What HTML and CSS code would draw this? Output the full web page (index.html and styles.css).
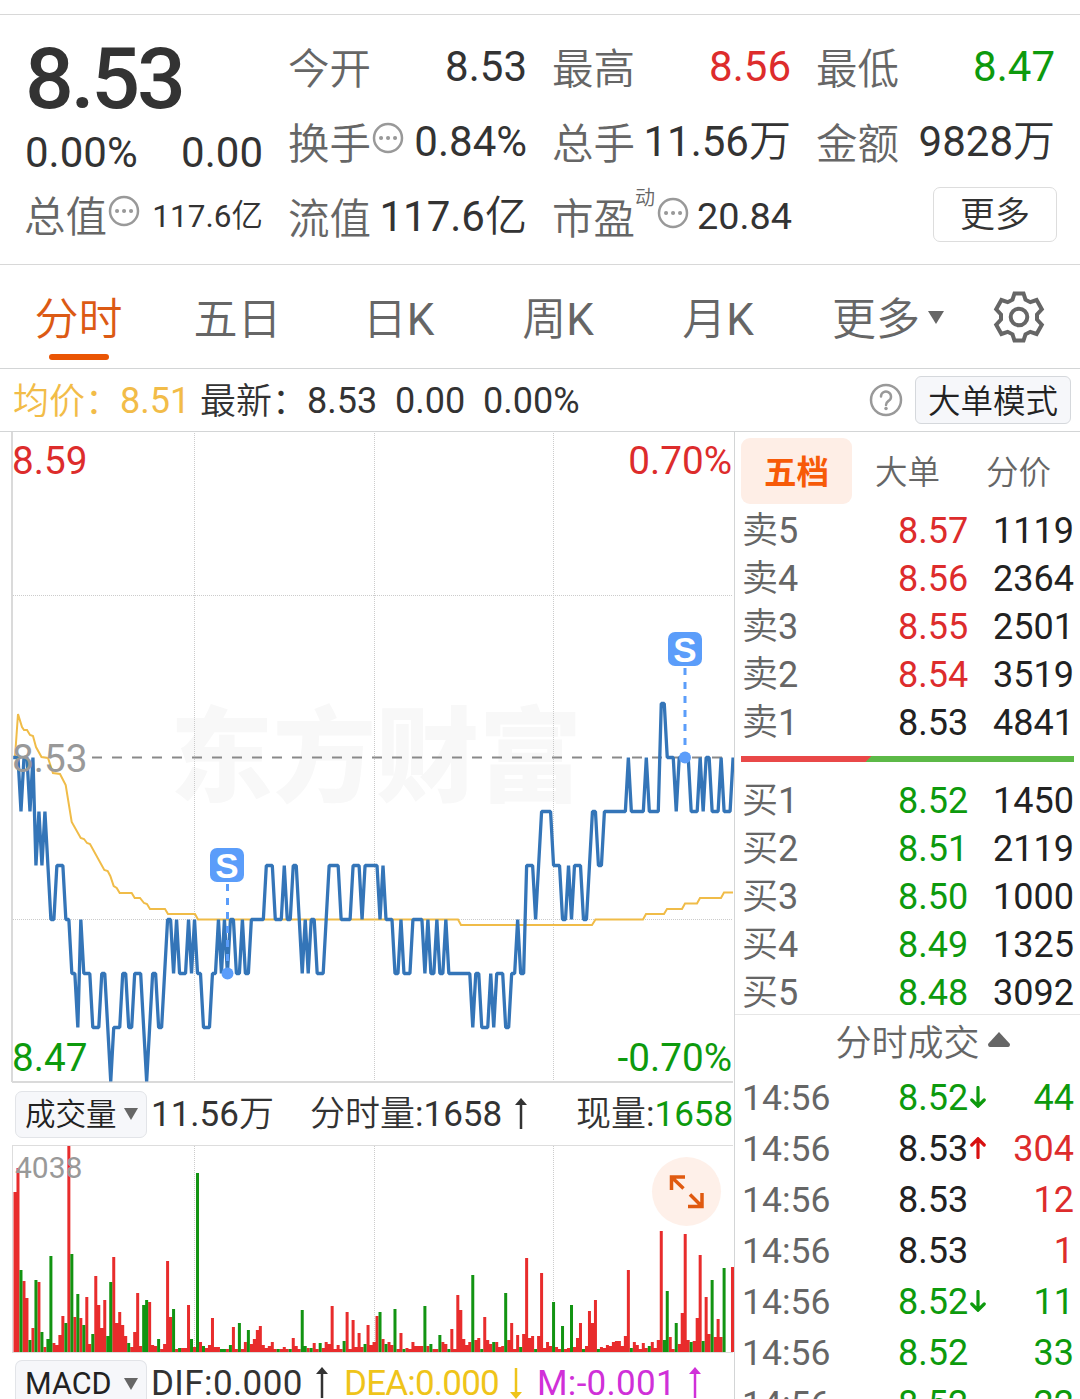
FILE: index.html
```html
<!DOCTYPE html>
<html lang="zh-CN">
	<head>
		<meta charset="utf-8">
		<title>分时</title>
		<link rel="stylesheet" href="styles.css">
	</head>
	<body>
		<div id="quote">
			<div class="col">
				<div class="price">8.53</div>
				<div class="cell change"><span>0.00%</span><span>0.00</span></div>
				<div class="cell"><label>总值</label><svg class="dots" viewBox="0 0 32 32"><circle cx="16" cy="16" r="14"/><path d="M9 16h.1M16 16h.1M23 16h.1"/></svg><b class="small">117.6<i>亿</i></b></div>
			</div>
			<div class="col">
				<div class="cell"><label>今开</label><b>8.53</b></div>
				<div class="cell"><label>换手</label><svg class="dots" viewBox="0 0 32 32"><circle cx="16" cy="16" r="14"/><path d="M9 16h.1M16 16h.1M23 16h.1"/></svg><b>0.84%</b></div>
				<div class="cell"><label>流值</label><b>117.6<i>亿</i></b></div>
			</div>
			<div class="col">
				<div class="cell"><label>最高</label><b class="red">8.56</b></div>
				<div class="cell"><label>总手</label><b>11.56<i>万</i></b></div>
				<div class="cell"><label>市盈<sup>动</sup></label><svg class="dots far" viewBox="0 0 32 32"><circle cx="16" cy="16" r="14"/><path d="M9 16h.1M16 16h.1M23 16h.1"/></svg><b class="mid">20.84</b></div>
			</div>
			<div class="col">
				<div class="cell"><label>最低</label><b class="green">8.47</b></div>
				<div class="cell"><label>金额</label><b>9828<i>万</i></b></div>
				<div class="cell"><a class="more" href="#">更多</a></div>
			</div>
		</div>

		<div id="tabs">
			<a class="on" href="#">分时</a>
			<a href="#">五日</a>
			<a href="#">日<b>K</b></a>
			<a href="#">周<b>K</b></a>
			<a href="#">月<b>K</b></a>
			<a class="drop" href="#">更多<span class="down"></span></a>
			<svg class="gear" viewBox="-27 -27 54 54"><path d="M-4.500-23.500H4.500L6.500-17.300L11.300-14.800L17.600-17L22.800-7.700L18-2.500V2.500L22.800 7.700L17.600 17L11.300 14.800L6.500 17.300L4.500 23.500H-4.500L-6.500 17.300L-11.300 14.800L-17.600 17L-22.800 7.700L-18 2.500V-2.500L-22.800-7.700L-17.600-17L-11.300-14.800L-6.500-17.300Z"/><circle r="8.300"/></svg>
		</div>

		<div id="info">
			<i class="avg">均价：</i><span class="avg num">8.51</span>
			<i class="last">最新：</i><span class="num2">8.53</span><span class="num3">0.00</span><span class="num3">0.00%</span>
			<svg class="help" viewBox="0 0 34 34"><circle cx="17" cy="17" r="15"/><path d="M12 13.500a5 5 0 1 1 8 4c-2 1.500-3 2-3 4.500"/><path d="M17 25.500v.1" stroke-width="3.500"/></svg>
			<a class="mode" href="#">大单模式</a>
		</div>

		<div id="main">
			<div id="left">
				<svg class="chart" width="734" height="651" viewBox="0 432 734 651">
					<text class="mark" x="170" y="794">东方财富</text>
					<path class="grid" d="M194.500 433V1081M374.500 433V1081M553.500 433V1081M13 595.500H733M13 919.500H733"/>
					<path class="frame" d="M12 432V1082M12 1082H733"/>
					<path class="zero" d="M92 757.500H722"/>
					<polyline class="avgline" points="15,757 18,714 22,727 24,730 27,730 30,735 33,736 36,747 41.500,757 48,758 53,773 60,774 65.700,785 71.700,822 80.700,838 84,839 87,843 90,844 104.300,870 107.700,871 110.300,876 113.700,886 116.700,888 119.700,893 131.700,893 134.700,898 140,898 144,903 147,904 150,909 165,909 168,914 195,914 198,919.500 458,919.500 461,925 592,925 595.500,919.500 643,919.500 646,914 664,914 667,909 682,909 685,903.500 697,903.500 700,898 721,898 724,892.500 733,892.500"/>
					<!-- x = minute, y = cents below the open -->
					<polyline class="line" transform="translate(15 757.500) scale(2.992 54)" points="-.6,0 1,0 2,1 3,0 4,0 5,1 6,0 7,2 8,1 9,2 10,1 11,2 12,3 13,3 14,2 16,2 17,3 18,3 19,4 20,4 21,5 22,3 23,4 25,4 26,5 28,5 29,4 30,4 31,5 32,6 33,5 35,5 36,4 37,4 38,5 39,5 40,4 42,4 43,5 44,6 45,5 46,4 47,4 48,5 49,5 50,4 51,3 52,3 53,4 54,3 55,4 57,4 58,3 59,4 60,3 61,4 62,4 63,5 65,5 66,4 67,4 68,3 69,4 70,3 71,4 72,3 73,3 74,4 75,4 76,3 77,4 78,4 79,3 83,3 84,2 86,2 87,3 89,3 90,2 91,3 92,3 93,2 94,2 95,3 96,4 97,3 98,4 99,3 100,3 101,4 103,4 104,3 105,2 108,2 109,3 112,3 113,2 115,2 116,3 117,2 121,2 122,3 123,2 124,3 126,3 127,4 128,4 129,3 130,4 132,4 133,3 136,3 137,4 138,3 139,4 140,4 141,3 142,4 143,4 144,3 145,4 152,4 153,5 154,4 155,4 156,5 158,5 159,4 160,5 161,4 163,4 164,5 165,5 166,4 167,4 168,3 169,4 170,4 171,2 173,2 174,3 175,2 176,1 179,1 180,2 182,2 183,3 184,3 185,2 186,3 187,2 189,2 190,3 191,3 192,2 193,1 194,1 195,2 196,2 197,1 204,1 205,0 206,1 210,1 211,0 212,1 215,1 216,-1 217,-1 218,0 220,0 221,1 222,0 225,0 226,1 228,1 229,0 230,1 231,0 232,0 233,1 235,1 236,0 237,1 239,1 240,0"/>
					<text class="axis red" x="12" y="474">8.59</text>
					<text class="axis red" x="732" y="474" text-anchor="end">0.70%</text>
					<text class="axis gray" x="12" y="772">8.53</text>
					<text class="axis green" x="12" y="1071">8.47</text>
					<text class="axis green" x="732" y="1071" text-anchor="end">-0.70%</text>
					<g class="sell" transform="translate(227 865)"><rect x="-17" y="-17" width="34" height="34" rx="7"/><path d="M.5 19V108"/><circle cx=".5" cy="108.500" r="6"/><text y="12.500">S</text></g>
					<g class="sell" transform="translate(685 649)"><rect x="-17" y="-17" width="34" height="34" rx="7"/><path d="M0 19V108"/><circle cy="108.500" r="6"/><text y="12.500">S</text></g>
				</svg>

				<div class="bar">
					<a class="pick" href="#">成交量<span class="down"></span></a>
					<span class="v1">11.56<i>万</i></span>
					<span class="v2"><i>分时量</i>:1658</span>
					<svg class="arrow" viewBox="0 0 12 32"><path d="M6 31V3"/><path class="head" d="M0 7L6 0L12 7Z"/></svg>
					<span class="v3"><i>现量</i>:<span class="green">1658</span></span>
				</div>

				<svg class="chart" width="734" height="208" viewBox="0 1145 734 208">
					<path class="grid" d="M194.500 1146V1352M374.500 1146V1352M553.500 1146V1352"/>
					<path class="thin" d="M12 1145.500H733M12 1352.500H733M12.500 1145V1353"/>
					<g class="vol" transform="translate(15 1352) scale(2.992 -1)">
						<path class="up" d="M0 0V160M1 0V184M3 0V71M4 0V54M6 0V24M8 0V70M10 0V5M13 0V9M14 0V7M15 0V17M16 0V36M18 0V206M20 0V35M22 0V34M24 0V55M25 0V8M27 0V76M28 0V47M29 0V24M30 0V52M33 0V95M34 0V29M35 0V40M36 0V27M37 0V16M39 0V5M40 0V20M41 0V59M42 0V6M45 0V50M46 0V7M47 0V6M49 0V3M50 0V8M51 0V91M52 0V35M54 0V3M56 0V4M57 0V4M58 0V47M60 0V5M62 0V10M64 0V4M65 0V7M66 0V34M67 0V5M68 0V5M71 0V3M73 0V25M74 0V3M76 0V3M77 0V10M79 0V8M80 0V13M81 0V22M82 0V26M83 0V7M84 0V4M85 0V6M86 0V10M87 0V3M89 0V3M90 0V5M91 0V3M93 0V14M94 0V6M95 0V3M98 0V4M100 0V9M101 0V3M103 0V4M104 0V10M105 0V8M106 0V46M107 0V3M108 0V7M109 0V3M111 0V40M112 0V3M113 0V32M114 0V5M115 0V19M116 0V5M118 0V27M119 0V7M120 0V10M121 0V36M123 0V13M125 0V10M126 0V7M128 0V3M129 0V19M131 0V4M132 0V3M133 0V10M134 0V6M135 0V6M136 0V6M138 0V6M140 0V3M141 0V3M143 0V10M144 0V8M146 0V23M147 0V3M148 0V57M149 0V42M150 0V13M151 0V7M152 0V10M154 0V12M155 0V14M157 0V35M158 0V12M159 0V8M161 0V10M162 0V5M163 0V6M165 0V12M166 0V29M167 0V3M168 0V17M170 0V18M171 0V94M172 0V14M173 0V16M175 0V16M176 0V79M177 0V4M178 0V10M179 0V6M181 0V5M182 0V3M184 0V3M185 0V4M187 0V5M188 0V14M189 0V29M191 0V6M192 0V41M193 0V29M194 0V52M196 0V5M197 0V4M198 0V7M199 0V6M200 0V10M201 0V11M202 0V11M203 0V6M204 0V16M205 0V82M207 0V10M208 0V7M209 0V3M210 0V9M211 0V4M213 0V10M214 0V4M215 0V12M216 0V121M219 0V15M220 0V3M222 0V8M223 0V39M224 0V118M225 0V12M227 0V11M228 0V34M229 0V97M231 0V55M232 0V18M234 0V15M235 0V33M236 0V15M239.800 0V85"/>
						<path class="dn" d="M2 0V82M5 0V12M7 0V72M9 0V20M11 0V13M12 0V96M17 0V29M19 0V98M21 0V58M23 0V27M26 0V18M31 0V16M32 0V70M38 0V9M43 0V47M44 0V52M48 0V13M53 0V43M55 0V4M59 0V13M61 0V179M63 0V6M69 0V3M70 0V3M72 0V7M75 0V29M78 0V22M88 0V3M92 0V3M96 0V42M97 0V6M99 0V4M102 0V9M110 0V11M117 0V8M122 0V40M124 0V8M127 0V43M130 0V3M137 0V46M139 0V8M142 0V17M145 0V3M153 0V77M156 0V3M160 0V10M164 0V59M169 0V5M174 0V3M180 0V50M183 0V26M186 0V47M190 0V3M195 0V3M206 0V4M212 0V6M217 0V12M218 0V61M221 0V29M226 0V10M230 0V11M233 0V72M237 0V84"/>
					</g>
					<text class="max gray" x="15" y="1178">4038</text>
					<circle cx="686.500" cy="1191.500" r="34.500" fill="#fef0e9"/>
					<path class="expand" d="M671.500 1190V1177H685M672 1177.500L683.500 1188.500M702 1193V1206.500H688M701.500 1206L690 1194.500"/>
				</svg>

				<div class="bar macd">
					<a class="pick" href="#">MACD<span class="down"></span></a>
					<span class="m1">DIF:0.000</span>
					<svg class="arrow" viewBox="0 0 12 32"><path d="M6 31V3"/><path class="head" d="M0 7L6 0L12 7Z"/></svg>
					<span class="m2">DEA:0.000</span>
					<svg class="arrow yellow" viewBox="0 0 12 32"><path d="M6 1V29"/><path class="head" d="M0 25L6 32L12 25Z"/></svg>
					<span class="m3">M:-0.001</span>
					<svg class="arrow pink" viewBox="0 0 12 32"><path d="M6 31V3"/><path class="head" d="M0 7L6 0L12 7Z"/></svg>
				</div>
			</div>

			<div id="right">
				<div class="subtabs"><a class="on" href="#">五档</a><a href="#">大单</a><a href="#">分价</a></div>
				<div class="row"><label><i>卖</i>5</label><b class="red">8.57</b><b>1119</b></div>
				<div class="row"><label><i>卖</i>4</label><b class="red">8.56</b><b>2364</b></div>
				<div class="row"><label><i>卖</i>3</label><b class="red">8.55</b><b>2501</b></div>
				<div class="row"><label><i>卖</i>2</label><b class="red">8.54</b><b>3519</b></div>
				<div class="row"><label><i>卖</i>1</label><b>8.53</b><b>4841</b></div>
				<div class="ratio"></div>
				<div class="row"><label><i>买</i>1</label><b class="green">8.52</b><b>1450</b></div>
				<div class="row"><label><i>买</i>2</label><b class="green">8.51</b><b>2119</b></div>
				<div class="row"><label><i>买</i>3</label><b class="green">8.50</b><b>1000</b></div>
				<div class="row"><label><i>买</i>4</label><b class="green">8.49</b><b>1325</b></div>
				<div class="row"><label><i>买</i>5</label><b class="green">8.48</b><b>3092</b></div>
				<div class="dealhead">分时成交<svg viewBox="0 0 22 15"><path d="M11 0L22 12Q22 15 20 15H2Q0 15 0 12Z"/></svg></div>
				<div class="row deal"><label>14:56</label><b class="green">8.52</b><svg class="green" viewBox="0 0 16 22"><path d="M8 1.500V20M1.800 14L8 20.200L14.200 14"/></svg><b class="green">44</b></div>
				<div class="row deal"><label>14:56</label><b>8.53</b><svg class="deepred" viewBox="0 0 16 22"><path d="M8 20.500V2M1.800 8L8 1.800L14.200 8"/></svg><b class="red">304</b></div>
				<div class="row deal"><label>14:56</label><b>8.53</b><b class="red">12</b></div>
				<div class="row deal"><label>14:56</label><b>8.53</b><b class="red">1</b></div>
				<div class="row deal"><label>14:56</label><b class="green">8.52</b><svg class="green" viewBox="0 0 16 22"><path d="M8 1.500V20M1.800 14L8 20.200L14.200 14"/></svg><b class="green">11</b></div>
				<div class="row deal"><label>14:56</label><b class="green">8.52</b><b class="green">33</b></div>
				<div class="row deal"><label>14:56</label><b class="green">8.52</b><b class="green">22</b></div>
			</div>
		</div>
	</body>
</html>
```
FILE: styles.css
```css
* {
	box-sizing: border-box;
}
body {
	margin: 0;
	width: 1080px;
	height: 1399px;
	overflow: hidden;
	padding-top: 14px;
	background: #fff;
	color: #333;
	font-family: Roboto, "Noto Sans CJK SC", sans-serif;
	font-size: 36px;
}
a {
	color: inherit;
	text-decoration: none;
}
b {
	font-weight: normal;
}
/* chinese inside numbers, a bit lighter */
i {
	font-style: normal;
	font-weight: 350;
}
svg {
	display: block;
	flex: none;
}
.red {
	color: #dd2c2c;
	fill: #dd2c2c;
}
.green {
	color: #0d9a0d;
	fill: #0d9a0d;
}
.gray {
	fill: #999;
}
.down {
	border: 8px solid transparent;
	border-top: 13px solid #666;
	border-bottom: 0;
}

/* quote header */
#quote {
	display: flex;
	gap: 26px;
	height: 251px;
	padding: 15px 25px 0;
	border-top: 1px solid #d8d8d8;
	border-bottom: 1px solid #d8d8d8;
	font-size: 42px;
	white-space: nowrap;
}
.col {
	width: 238px;
}
.price {
	height: 98px;
	line-height: 98px;
	font-size: 86px;
	font-weight: 500;
	letter-spacing: -3.2px;
}
.cell {
	display: flex;
	align-items: center;
	height: 75px;
	line-height: 75px;
}
.cell label {
	position: relative;
	margin: 4px 0 0 -1px;
	color: #666;
	font-size: 41.5px;
	font-weight: 350;
}
.cell b {
	margin: -2px 0 0 auto;
}
.cell.change {
	height: 50px;
	line-height: 54px;
	justify-content: space-between;
}
.cell .small {
	margin-top: 1px;
	font-size: 31.5px;
}
.cell .mid {
	margin-right: -1px;
	font-size: 37.8px;
}
.cell sup {
	position: absolute;
	left: 83px;
	top: -4px;
	line-height: 40px;
	font-size: 20px;
}
.dots {
	width: 32px;
	height: 32px;
	margin: -9px 0 0 1px;
	fill: none;
	stroke: #999;
	stroke-width: 2.5;
}
.dots path {
	stroke-width: 4;
	stroke-linecap: round;
}
.dots.far {
	margin-left: 22px;
}
.more {
	width: 124px;
	height: 55px;
	line-height: 56px;
	margin: -7px -2px 0 auto;
	border: 1px solid #ddd;
	border-radius: 7px;
	text-align: center;
	font-size: 35px;
	font-weight: 350;
}

/* period tabs */
#tabs {
	display: grid;
	grid-template-columns: 157px 161px 161px 158px 162px 178px 83px;
	height: 104px;
	border-bottom: 1px solid #d3d5d6;
	color: #666;
	font-size: 44px;
	font-weight: 350;
	text-align: center;
	line-height: 110px;
}
#tabs .on {
	position: relative;
	color: #dc5a14;
}
#tabs .on:after {
	content: "";
	position: absolute;
	left: 49px;
	top: 89px;
	width: 60px;
	height: 6px;
	border-radius: 3px;
	background: #ea5504;
}
#tabs .drop {
	display: flex;
	align-items: center;
	gap: 8px;
	padding-left: 33px;
}
#tabs .down {
	margin-top: -6px;
}
.gear {
	width: 54px;
	height: 54px;
	margin: 25px 0 0 14.5px;
	fill: none;
	stroke: #666;
	stroke-width: 4;
}

/* average / latest price */
#info {
	display: flex;
	align-items: center;
	height: 63px;
	padding: 0 9px 0 13px;
	border-bottom: 1px solid #d3d5d6;
	line-height: 63px;
	white-space: nowrap;
}
#info span {
	padding-top: 2px;
}
#info i {
	padding-top: 4px;
}
#info .avg {
	width: 107px;
	color: #f2bc48;
}
#info .num {
	width: 80px;
}
#info .last {
	width: 107px;
}
#info .num2 {
	width: 88px;
}
#info .num3 {
	width: 88px;
}
.help {
	width: 34px;
	height: 34px;
	margin-left: auto;
	fill: none;
	stroke: #999;
	stroke-width: 2.5;
	stroke-linecap: round;
}
.mode {
	width: 156px;
	height: 48px;
	line-height: 51px;
	margin-left: 12px;
	border: 1px solid #d5d8dc;
	border-radius: 6px;
	background: #f6f7fa;
	color: #222;
	font-size: 32.5px;
	font-weight: 350;
	text-align: center;
}

#main {
	display: flex;
}
#left {
	width: 734px;
}
.grid {
	fill: none;
	stroke: #ccc;
	stroke-dasharray: 1 1;
}
.frame {
	fill: none;
	stroke: #dadada;
	stroke-width: 2;
}
.thin {
	fill: none;
	stroke: #ddd;
}
.zero {
	stroke: #8a8a8a;
	stroke-width: 2;
	stroke-dasharray: 10 10;
}
.avgline {
	fill: none;
	stroke: #f0bc48;
	stroke-width: 2;
}
.line {
	fill: none;
	stroke: #3475b8;
	stroke-width: 3.3;
	stroke-linejoin: bevel;
	vector-effect: non-scaling-stroke;
}
.mark {
	fill: #f8f8f8;
	font-size: 103px;
	font-weight: 900;
}
.axis {
	font-size: 38.7px;
}
.sell {
	fill: #5b9dfa;
}
.sell path {
	stroke: #5b9dfa;
	stroke-width: 3;
	stroke-dasharray: 7 7;
}
.sell text {
	fill: #fff;
	font-family: "Liberation Sans", sans-serif;
	font-size: 35px;
	font-weight: 700;
	text-anchor: middle;
}
.vol path {
	stroke-width: 3;
	vector-effect: non-scaling-stroke;
}
.up {
	stroke: #e82c2c;
}
.dn {
	stroke: #129412;
}
.max {
	font-size: 30px;
}
.expand {
	fill: none;
	stroke: #e05a10;
	stroke-width: 3.5;
}

/* indicator rows */
.bar {
	display: flex;
	align-items: center;
	height: 62px;
	padding-left: 15px;
	line-height: 65px;
	white-space: nowrap;
	font-size: 35px;
}
.pick {
	display: flex;
	align-items: center;
	justify-content: space-between;
	width: 132px;
	height: 47px;
	line-height: 49px;
	padding: 0 8px 0 9px;
	border: 1px solid #e2e4e8;
	border-radius: 7px;
	background: #f6f7fa;
	color: #222;
	font-size: 30.5px;
	font-weight: 350;
}
.pick .down {
	border-width: 12px 7.5px 0;
}
.v1 {
	width: 159px;
	margin-left: 4px;
}
.v2 {
	width: 205px;
}
.v3 {
	margin-left: 49px;
}
.arrow {
	width: 12px;
	height: 32px;
	fill: #333;
	stroke: #333;
	stroke-width: 2.5;
}
.arrow .head {
	stroke: none;
}
.yellow {
	fill: #efc41a;
	stroke: #efc41a;
}
.pink {
	fill: #d030d8;
	stroke: #d030d8;
}
.macd {
	height: 46px;
	align-items: flex-end;
	line-height: 30px;
}
.macd .pick {
	height: 39px;
	padding-top: 8px;
	border-bottom: 0;
	border-radius: 7px 7px 0 0;
	font-weight: 400;
	line-height: 30px;
}
.m1 {
	width: 165px;
	margin-left: 4px;
	letter-spacing: .4px;
}
.m2 {
	width: 166px;
	margin-left: 16px;
	color: #efc41a;
	letter-spacing: -.8px;
}
.m3 {
	width: 152px;
	margin-left: 15px;
	color: #d030d8;
	letter-spacing: .3px;
}

/* order book */
#right {
	width: 346px;
	border-left: 1px solid #d3d5d6;
	color: #222;
}
.subtabs {
	display: flex;
	height: 74px;
	padding: 6px 0 0 6px;
	font-size: 32.5px;
	font-weight: 350;
	line-height: 71px;
	text-align: center;
	color: #666;
}
.subtabs a {
	width: 111px;
	height: 66px;
}
.subtabs .on {
	border-radius: 9px;
	background: #feeee6;
	color: #f75a08;
	font-weight: bold;
}
.row {
	display: flex;
	align-items: center;
	height: 48px;
	padding: 2px 6px 0 7px;
	line-height: 46px;
}
.row label {
	width: 156px;
	color: #666;
}
.row b:last-child {
	margin-left: auto;
}
.ratio {
	height: 6px;
	margin: 10px 6px 14px;
	background: linear-gradient(135deg, #e94848 92px, #5cb947 92.5px);
}
.dealhead {
	display: flex;
	align-items: center;
	justify-content: center;
	gap: 8px;
	height: 60px;
	margin-top: -2px;
	padding-left: 30px;
	border-top: 1px solid #e6e6e6;
	color: #666;
	font-weight: 350;
	line-height: 63px;
}
.dealhead svg {
	width: 22px;
	height: 15px;
	margin-top: -11px;
	fill: #666;
}
.deal {
	height: 51px;
	padding-top: 0;
	line-height: 51px;
	margin-top: -1px;
	margin-bottom: 1px;
}
.deal label {
	font-size: 35.5px;
}
.deal svg {
	width: 16px;
	height: 22px;
	margin: -3px 0 0 2px;
	fill: none;
	stroke: #0d9a0d;
	stroke-width: 3.2;
	stroke-linecap: round;
}
.deal .deepred {
	stroke: #d81010;
}
```
